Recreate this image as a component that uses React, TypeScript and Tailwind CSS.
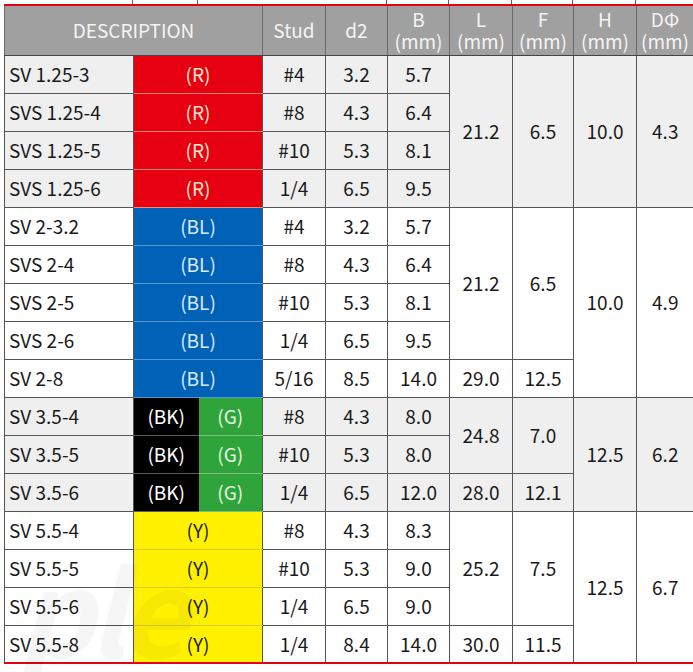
const font = { fontFamily: '"Noto Sans CJK JP", "Noto Sans", sans-serif' };

type Row = {
  name: string;
  color: "R" | "BL" | "BKG" | "Y";
  stud: string;
  d2: string;
  b: string;
};

const rows: Row[] = [
  { name: "SV 1.25-3", color: "R", stud: "#4", d2: "3.2", b: "5.7" },
  { name: "SVS 1.25-4", color: "R", stud: "#8", d2: "4.3", b: "6.4" },
  { name: "SVS 1.25-5", color: "R", stud: "#10", d2: "5.3", b: "8.1" },
  { name: "SVS 1.25-6", color: "R", stud: "1/4", d2: "6.5", b: "9.5" },
  { name: "SV 2-3.2", color: "BL", stud: "#4", d2: "3.2", b: "5.7" },
  { name: "SVS 2-4", color: "BL", stud: "#8", d2: "4.3", b: "6.4" },
  { name: "SVS 2-5", color: "BL", stud: "#10", d2: "5.3", b: "8.1" },
  { name: "SVS 2-6", color: "BL", stud: "1/4", d2: "6.5", b: "9.5" },
  { name: "SV 2-8", color: "BL", stud: "5/16", d2: "8.5", b: "14.0" },
  { name: "SV 3.5-4", color: "BKG", stud: "#8", d2: "4.3", b: "8.0" },
  { name: "SV 3.5-5", color: "BKG", stud: "#10", d2: "5.3", b: "8.0" },
  { name: "SV 3.5-6", color: "BKG", stud: "1/4", d2: "6.5", b: "12.0" },
  { name: "SV 5.5-4", color: "Y", stud: "#8", d2: "4.3", b: "8.3" },
  { name: "SV 5.5-5", color: "Y", stud: "#10", d2: "5.3", b: "9.0" },
  { name: "SV 5.5-6", color: "Y", stud: "1/4", d2: "6.5", b: "9.0" },
  { name: "SV 5.5-8", color: "Y", stud: "1/4", d2: "8.4", b: "14.0" },
];

// merged cells keyed by the row index where they start
const lf: Record<number, { l: string; f: string; span: number }> = {
  0: { l: "21.2", f: "6.5", span: 4 },
  4: { l: "21.2", f: "6.5", span: 4 },
  8: { l: "29.0", f: "12.5", span: 1 },
  9: { l: "24.8", f: "7.0", span: 2 },
  11: { l: "28.0", f: "12.1", span: 1 },
  12: { l: "25.2", f: "7.5", span: 3 },
  15: { l: "30.0", f: "11.5", span: 1 },
};

const hd: Record<number, { h: string; d: string; span: number }> = {
  0: { h: "10.0", d: "4.3", span: 4 },
  4: { h: "10.0", d: "4.9", span: 5 },
  9: { h: "12.5", d: "6.2", span: 3 },
  12: { h: "12.5", d: "6.7", span: 4 },
};

const td = "border border-[#555] text-center text-[19px] text-[#1a1a1a] p-0";
const redBottom = "border-b-2 border-b-[#e60012]";

function ColorCells({ color, last }: { color: Row["color"]; last: boolean }) {
  if (color === "BKG") {
    return (
      <>
        <td className="border-y border-[#5a5a5a] border-l border-l-[#555] bg-black text-center text-[19px] text-white p-0">
          (BK)
        </td>
        <td className="border-y border-[#7fbf86] border-r border-r-[#555] bg-[#2ea43a] text-center text-[19px] text-[#e6f5e0] p-0">
          (G)
        </td>
      </>
    );
  }
  if (color === "R") {
    return (
      <td
        colSpan={2}
        className="border-x border-x-[#555] border-y border-y-[#f08a70] bg-[#e60012] text-center text-[19px] text-[#ffe6cc] p-0"
      >
        (R)
      </td>
    );
  }
  if (color === "BL") {
    return (
      <td
        colSpan={2}
        className="border-x border-x-[#555] border-y border-y-[#5b95d0] bg-[#0062b6] text-center text-[19px] text-[#dce9fb] p-0"
      >
        (BL)
      </td>
    );
  }
  return (
    <td
      colSpan={2}
      className={`border-x border-x-[#555] border-t border-t-[#d8cc30] bg-[#fff100] text-center text-[19px] text-[#1a1a1a] p-0 ${
        last ? redBottom : "border-b border-b-[#d8cc30]"
      }`}
    >
      (Y)
    </td>
  );
}

export default function App() {
  return (
    <div className="relative w-[693px] h-[672px] bg-white overflow-hidden" style={font}>
      {/* stubs of the row above */}
      <div className="flex h-1 ml-1">
        <div className="w-[129px] border-r border-[#8a4a4a]" />
        <div className="w-[65px] border-r border-[#8a4a4a]" />
        <div className="w-[189px] border-r border-[#8a4a4a]" />
        <div className="w-[62px] border-r border-[#8a4a4a]" />
        <div className="w-[63px] border-r border-[#8a4a4a]" />
        <div className="w-[61px] border-r border-[#8a4a4a]" />
        <div className="w-[63px] border-r border-[#8a4a4a]" />
      </div>
      <table className="ml-1 table-fixed border-collapse w-[689px] border-t-2 border-t-[#e60012]">
        <colgroup>
          <col className="w-[129px]" />
          <col className="w-[65px]" />
          <col className="w-[64px]" />
          <col className="w-[63px]" />
          <col className="w-[62px]" />
          <col className="w-[62px]" />
          <col className="w-[63px]" />
          <col className="w-[61px]" />
          <col className="w-[63px]" />
          <col className="w-[57px]" />
        </colgroup>
        <thead>
          <tr className="h-[50px] bg-[#a0a0a0] text-[#f4f4f4] text-[19px] leading-[22px]">
            <th colSpan={3} className="border-x border-x-[#6a6a6a] border-b border-b-[#444] font-normal">
              DESCRIPTION
            </th>
            <th className="border-x border-x-[#6a6a6a] border-b border-b-[#444] font-normal">Stud</th>
            <th className="border-x border-x-[#6a6a6a] border-b border-b-[#444] font-normal">d2</th>
            {["B", "L", "F", "H", "DΦ"].map((h) => (
              <th key={h} className="border-x border-x-[#6a6a6a] border-b border-b-[#444] font-normal whitespace-nowrap">
                {h}
                <br />
                (mm)
              </th>
            ))}
          </tr>
        </thead>
        <tbody>
          {rows.map((r, i) => {
            const gray = i < 4 || (i >= 9 && i < 12);
            const last = i === rows.length - 1;
            const bb = last ? redBottom : "";
            return (
              <tr key={r.name} className={`h-[38px] ${gray ? "bg-[#efefef]" : "bg-white"}`}>
                <td className={`${td} text-left pl-1 ${bb}`}>{r.name}</td>
                <ColorCells color={r.color} last={last} />
                <td className={`${td} ${bb}`}>{r.stud}</td>
                <td className={`${td} ${bb}`}>{r.d2}</td>
                <td className={`${td} ${bb}`}>{r.b}</td>
                {lf[i] && (
                  <>
                    <td rowSpan={lf[i].span} className={`${td} ${i + lf[i].span === 16 ? redBottom : ""}`}>
                      {lf[i].l}
                    </td>
                    <td rowSpan={lf[i].span} className={`${td} ${i + lf[i].span === 16 ? redBottom : ""}`}>
                      {lf[i].f}
                    </td>
                  </>
                )}
                {hd[i] && (
                  <>
                    <td rowSpan={hd[i].span} className={`${td} ${i + hd[i].span === 16 ? redBottom : ""}`}>
                      {hd[i].h}
                    </td>
                    <td rowSpan={hd[i].span} className={`${td} border-r-0 ${i + hd[i].span === 16 ? redBottom : ""}`}>
                      {hd[i].d}
                    </td>
                  </>
                )}
              </tr>
            );
          })}
        </tbody>
      </table>
      {/* faint watermark */}
      <div className="pointer-events-none absolute left-[18px] top-[548px] text-[118px] font-bold italic leading-none text-black/[0.035] tracking-[-6px]">
        ple
      </div>
      <div className="pointer-events-none absolute left-[183px] top-[584px] text-[15px] leading-none text-black/[0.06]">
        ®
      </div>
    </div>
  );
}
